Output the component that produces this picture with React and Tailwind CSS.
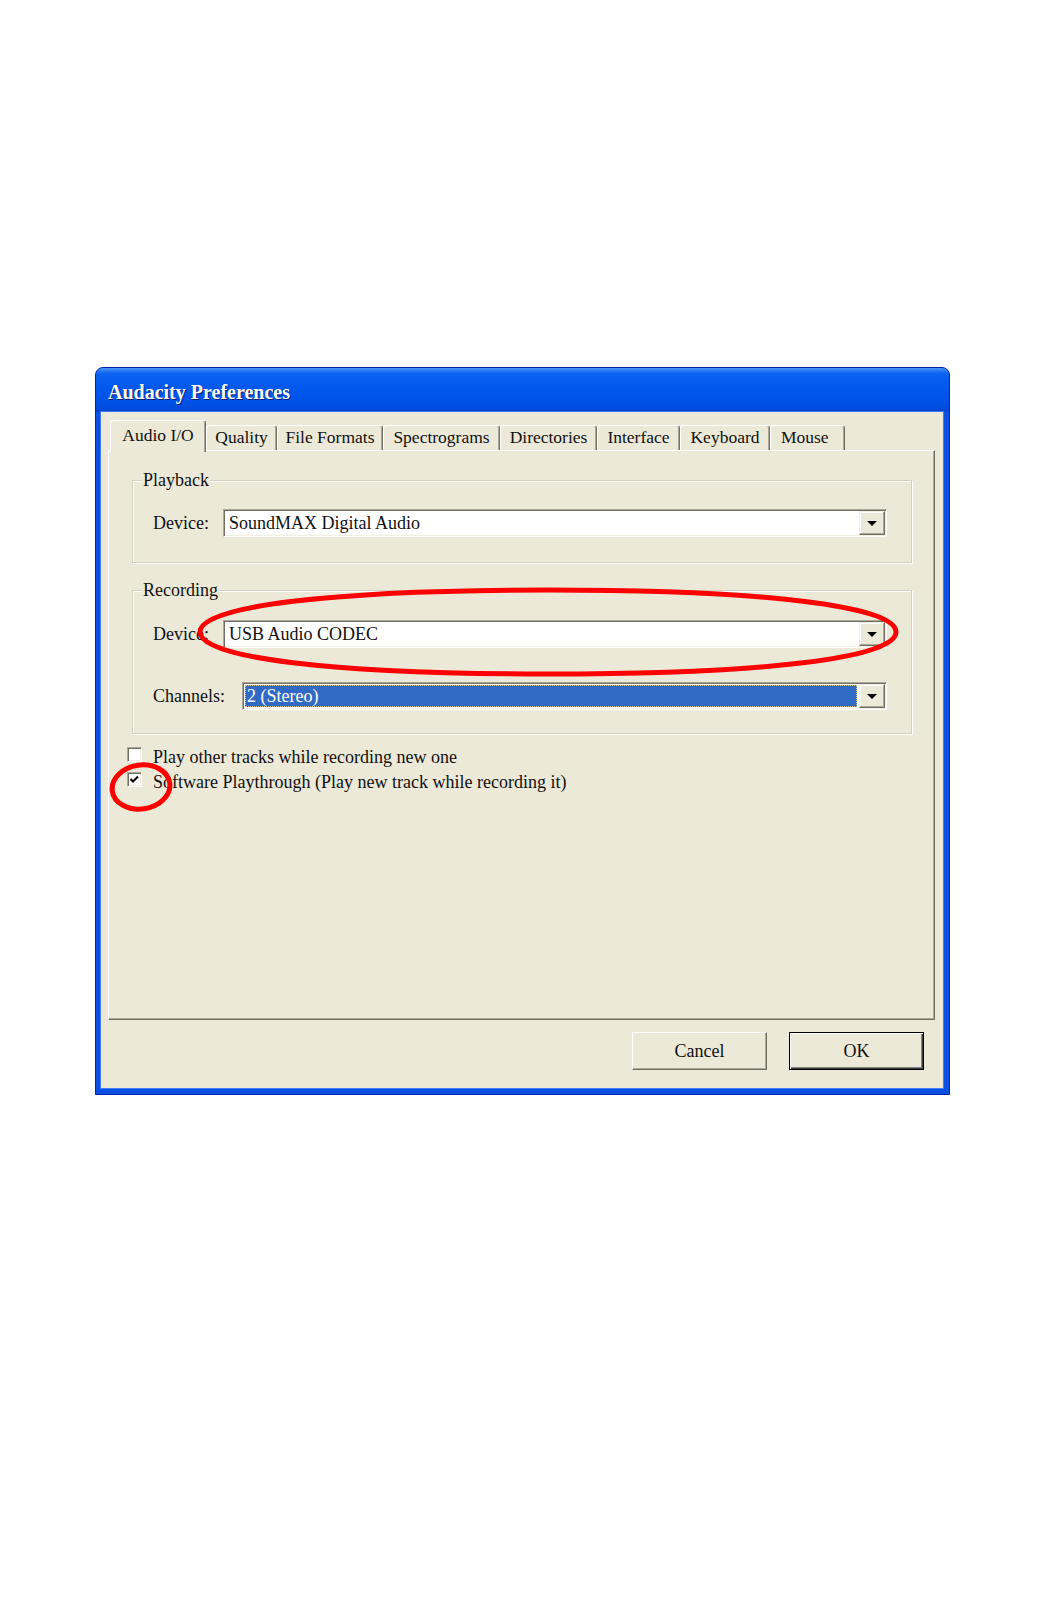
import React from "react";

const TABS = [
  { label: "Audio I/O", w: "w-[96px]", active: true },
  { label: "Quality", w: "w-[71px]" },
  { label: "File Formats", w: "w-[106px]" },
  { label: "Spectrograms", w: "w-[117px]" },
  { label: "Directories", w: "w-[97px]" },
  { label: "Interface", w: "w-[83px]" },
  { label: "Keyboard", w: "w-[90px]" },
  { label: "Mouse", w: "w-[75px]", left: true },
];

// small black arrow on the drop-down button
const DropButton = () => (
  <div className="w-[26px] h-full flex items-center justify-center bg-[#ece9d8] border border-t-[#f1efe2] border-l-[#f1efe2] border-r-[#716f64] border-b-[#716f64] shadow-[inset_-1px_-1px_0_#aca899,inset_1px_1px_0_#ffffff]">
    <div className="w-0 h-0 border-l-[5px] border-r-[5px] border-t-[5px] border-l-transparent border-r-transparent border-t-black" />
  </div>
);

const Combo = ({ value, selected }) => (
  <div className="flex-1 flex h-[28px] p-[1px] bg-white border border-t-[#aca899] border-l-[#aca899] border-b-white border-r-white shadow-[inset_1px_1px_0_#716f64,inset_-1px_-1px_0_#f1efe2]">
    {selected ? (
      <div className="flex-1 flex items-center ml-[1px] mr-[2px] my-[1px] pl-[1px] bg-[#316ac5] text-white border border-dotted border-[#d8c27a] leading-none">
        {value}
      </div>
    ) : (
      <div className="flex-1 flex items-center pl-[4px] leading-none">{value}</div>
    )}
    <DropButton />
  </div>
);

const Group = ({ title, className, children }) => (
  <div
    className={`relative ml-[23px] mr-[22px] border border-[#d0d0bf] shadow-[1px_1px_0_#ffffff,inset_1px_1px_0_#ffffff] ${className}`}
  >
    <span className="absolute -top-[11px] left-[9px] px-[1px] bg-[#ece9d8] leading-[20px]">
      {title}
    </span>
    {children}
  </div>
);

const Checkbox = ({ checked, label }) => (
  <div className="flex items-center h-[25px]">
    <div className="ml-[18px] mr-[11px] mb-[4px] w-[15px] h-[15px] bg-white border border-t-[#aca899] border-l-[#aca899] border-b-white border-r-white shadow-[inset_1px_1px_0_#716f64,inset_-1px_-1px_0_#f1efe2]">
      {checked && (
        <svg width="13" height="13" viewBox="0 0 13 13">
          <path d="M2.5 6 L5 8.5 L10 3.5" stroke="#000" strokeWidth="2" fill="none" />
        </svg>
      )}
    </div>
    <span className="leading-none">{label}</span>
  </div>
);

const Button = ({ children, isDefault }) => (
  <button
    className={`w-[135px] h-[38px] bg-[#ece9d8] text-[18px] leading-none ${
      isDefault
        ? "border border-black shadow-[inset_1px_1px_0_#ffffff,inset_-1px_-1px_0_#404040,inset_-2px_-2px_0_#808080]"
        : "border border-t-[#ffffff] border-l-[#ffffff] border-r-[#716f64] border-b-[#716f64] shadow-[inset_-1px_-1px_0_#aca899]"
    }`}
  >
    {children}
  </button>
);

export default function App() {
  return (
    <div className="relative w-[1046px] h-[1617px] bg-white overflow-hidden pt-[367px] pl-[95px] font-['Liberation_Serif',serif] text-[18px] text-[#111]">
      {/* window */}
      <div className="w-[855px] h-[728px] flex flex-col rounded-t-[8px] bg-[#0b4fe3] border border-[#0021a8]">
        {/* title bar */}
        <div className="h-[44px] flex items-center pl-[12px] pt-[3px] rounded-t-[7px] bg-[linear-gradient(to_bottom,#4a94f8_0%,#0c63f0_12%,#0058ee_45%,#0052e6_80%,#0045d2_100%)]">
          <span className="text-white font-bold text-[20px] [text-shadow:1px_1px_0_#0a1c72]">
            Audacity Preferences
          </span>
        </div>

        {/* client area */}
        <div className="ml-[5px] mr-[6px] mb-[6px] h-[676px] bg-[#ece9d8] pt-[8px] flex flex-col shadow-[0_0_0_1px_#3d7cf2]">
          <div className="ml-[7px] mr-[8px]">
            {/* tabs */}
            <div className="flex items-end h-[30px] pl-[2px]">
              {TABS.map((t) =>
                t.active ? (
                  <div
                    key={t.label}
                    className={`${t.w} h-[32px] -mb-[2px] relative z-10 flex justify-center pt-[6px] bg-[#ece9d8] border-t border-l border-t-white border-l-white border-r border-r-[#716f64] shadow-[inset_-1px_0_0_#aca899] rounded-t-[3px] text-[17.5px] leading-none`}
                  >
                    {t.label}
                  </div>
                ) : (
                  <div
                    key={t.label}
                    className={`${t.w} h-[25px] flex items-center ${
                      t.left ? "pl-[10px]" : "justify-center"
                    } border-t border-l border-t-white border-l-white border-r border-r-[#716f64] shadow-[inset_-1px_0_0_#aca899] rounded-t-[3px] text-[17.5px] leading-none`}
                  >
                    {t.label}
                  </div>
                )
              )}
            </div>

            {/* panel */}
            <div className="h-[570px] border border-t-white border-l-white border-r-[#716f64] border-b-[#716f64] shadow-[inset_-1px_-1px_0_#aca899]">
              <Group title="Playback" className="mt-[29px] h-[83px] pt-[28px]">
                <div className="flex items-center pl-[20px] pr-[24px]">
                  <span className="w-[70px] leading-none">Device:</span>
                  <Combo value="SoundMAX Digital Audio" />
                </div>
              </Group>

              <Group title="Recording" className="mt-[27px] h-[144px] pt-[29px]">
                <div className="flex items-center pl-[20px] pr-[24px]">
                  <span className="w-[70px] leading-none">Device:</span>
                  <Combo value="USB Audio CODEC" />
                </div>
                <div className="flex items-center pl-[20px] pr-[24px] mt-[34px]">
                  <span className="w-[89px] leading-none">Channels:</span>
                  <Combo value="2 (Stereo)" selected />
                </div>
              </Group>

              <div className="mt-[10px]">
                <Checkbox label="Play other tracks while recording new one" />
                <Checkbox checked label="Software Playthrough (Play new track while recording it)" />
              </div>
            </div>
          </div>

          {/* buttons */}
          <div className="mt-[12px] flex justify-end gap-[22px] pr-[19px]">
            <Button>Cancel</Button>
            <Button isDefault>OK</Button>
          </div>
        </div>
      </div>

      {/* red hand-drawn markings over the screenshot */}
      <svg
        className="absolute inset-0 pointer-events-none"
        width="1046"
        height="1617"
        viewBox="0 0 1046 1617"
      >
        <path
          d="M200 632 C200 606 332 590 548 590 C764 590 896 606 896 632 C896 658 764 674 548 674 C332 674 200 658 200 632 Z"
          fill="none"
          stroke="#ff0000"
          strokeWidth="5"
        />
        <ellipse
          cx="141"
          cy="787"
          rx="29"
          ry="22"
          fill="none"
          stroke="#ff0000"
          strokeWidth="5"
          transform="rotate(-8 141 787)"
        />
      </svg>
    </div>
  );
}
